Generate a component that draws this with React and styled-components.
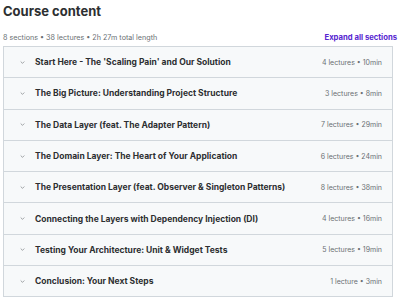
import React from 'react';
import styled, { createGlobalStyle } from 'styled-components';

const GlobalStyle = createGlobalStyle`
  html, body {
    margin: 0;
    padding: 0;
    background: #ffffff;
  }
  body {
    font-family: Inter, "Liberation Sans", Arial, sans-serif;
    color: #2d2f31;
  }
`;

const Wrapper = styled.div`
  padding: 3px 7px 0 3px;
  width: 400px;
  height: 299px;
  box-sizing: border-box;
  overflow: hidden;
`;

const Title = styled.h2`
  margin: 0;
  font-size: 13px;
  line-height: 17px;
  font-weight: 700;
`;

const SummaryBar = styled.div`
  display: flex;
  justify-content: space-between;
  align-items: flex-end;
  margin-top: 10px;
  margin-right: -4px;
  height: 12px;
`;

const Summary = styled.span`
  font-size: 7.2px;
  color: #6a6f73;
`;

const ExpandLink = styled.button`
  border: none;
  background: none;
  padding: 0;
  font-family: inherit;
  font-size: 7.7px;
  font-weight: 700;
  color: #5624d0;
  cursor: pointer;
`;

const SectionList = styled.div`
  margin-top: 4px;
  border: 1px solid #d1d7dc;
  border-bottom: none;
`;

const SectionRow = styled.div`
  display: flex;
  align-items: center;
  height: 30.3px;
  padding: 0 10px 0 15px;
  background: #f7f9fa;
  border-bottom: 1px solid #d1d7dc;
`;

const Chevron = styled.svg`
  width: 7px;
  height: 7px;
  flex: none;
  margin-right: 9px;
`;

const SectionTitle = styled.span`
  flex: 1;
  font-size: 8.5px;
  font-weight: 700;
  color: #2d2f31;
  white-space: nowrap;
`;

const SectionMeta = styled.span`
  font-size: 7px;
  color: #6a6f73;
  white-space: nowrap;
`;

const sections = [
  { title: "Start Here - The 'Scaling Pain' and Our Solution", meta: '4 lectures • 10min' },
  { title: 'The Big Picture: Understanding Project Structure', meta: '3 lectures • 8min' },
  { title: 'The Data Layer (feat. The Adapter Pattern)', meta: '7 lectures • 29min' },
  { title: 'The Domain Layer: The Heart of Your Application', meta: '6 lectures • 24min' },
  { title: 'The Presentation Layer (feat. Observer & Singleton Patterns)', meta: '8 lectures • 38min' },
  { title: 'Connecting the Layers with Dependency Injection (DI)', meta: '4 lectures • 16min' },
  { title: 'Testing Your Architecture: Unit & Widget Tests', meta: '5 lectures • 19min' },
  { title: 'Conclusion: Your Next Steps', meta: '1 lecture • 3min' },
];

function ChevronDown() {
  return (
    <Chevron viewBox="0 0 10 10">
      <path d="M2.8 4 L5 6.2 L7.2 4" fill="none" stroke="#6a6f73" strokeWidth="0.9" strokeLinecap="round" strokeLinejoin="round" />
    </Chevron>
  );
}

export default function App() {
  return (
    <Wrapper>
      <GlobalStyle />
      <Title>Course content</Title>
      <SummaryBar>
        <Summary>8 sections • 38 lectures • 2h 27m total length</Summary>
        <ExpandLink>Expand all sections</ExpandLink>
      </SummaryBar>
      <SectionList>
        {sections.map((s) => (
          <SectionRow key={s.title}>
            <ChevronDown />
            <SectionTitle>{s.title}</SectionTitle>
            <SectionMeta>{s.meta}</SectionMeta>
          </SectionRow>
        ))}
      </SectionList>
    </Wrapper>
  );
}
